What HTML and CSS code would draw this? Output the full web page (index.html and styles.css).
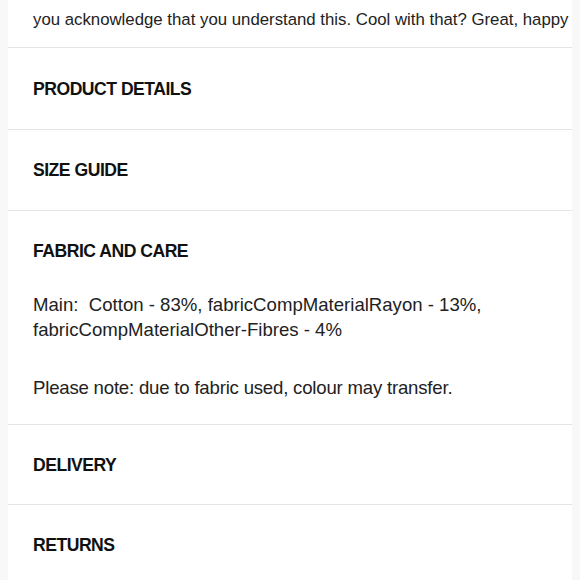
FILE: index.html
```html
<!DOCTYPE html>
<html lang="en">
<head>
  <meta charset="UTF-8">
  <meta name="viewport" content="width=device-width, initial-scale=1.0">
  <title>Product information</title>
  <link rel="stylesheet" href="styles.css">
</head>
<body>
  <div class="panel">
    <p class="intro">you acknowledge that you understand this. Cool with that? Great, happy</p>

    <div class="section first">
      <h2>PRODUCT DETAILS</h2>
    </div>

    <div class="section">
      <h2>SIZE GUIDE</h2>
    </div>

    <div class="section open">
      <h2>FABRIC AND CARE</h2>
      <p class="info">Main:&nbsp; Cotton - 83%, fabricCompMaterialRayon - 13%, fabricCompMaterialOther-Fibres - 4%</p>
      <p class="info note">Please note: due to fabric used, colour may transfer.</p>
    </div>

    <div class="section short">
      <h2>DELIVERY</h2>
    </div>

    <div class="section last">
      <h2>RETURNS</h2>
    </div>
  </div>
</body>
</html>
```

FILE: styles.css
```css
body {
  margin: 0;
  background-color: #f8f8f8;
  font-family: "Liberation Sans", Arial, sans-serif;
  color: #1a1a1a;
}

.panel {
  margin: 0 8px;
  background-color: #fff;
  height: 580px;
  overflow: hidden;
}

.intro {
  margin: 0;
  padding: 8px 0 15px 25px;
  font-size: 16.8px;
  line-height: 24px;
  white-space: nowrap;
  color: #222;
  border-bottom: 1px solid #e4e4e4;
}

.section {
  padding: 28px 25px;
  border-bottom: 1px solid #e4e4e4;
}

.section.first {
  padding-top: 29px;
}

.section.short {
  padding-bottom: 27px;
}

.section.last {
  border-bottom: none;
}

.section h2 {
  margin: 0;
  font-size: 17.6px;
  line-height: 24px;
  font-weight: bold;
  letter-spacing: -0.5px;
  color: #111;
}

.section.open {
  padding-bottom: 24px;
}

.info {
  margin: 29px 0 0;
  font-size: 18.6px;
  line-height: 25px;
  color: #222;
  max-width: 470px;
}

.info.note {
  margin-top: 33px;
  letter-spacing: -0.2px;
}
```
